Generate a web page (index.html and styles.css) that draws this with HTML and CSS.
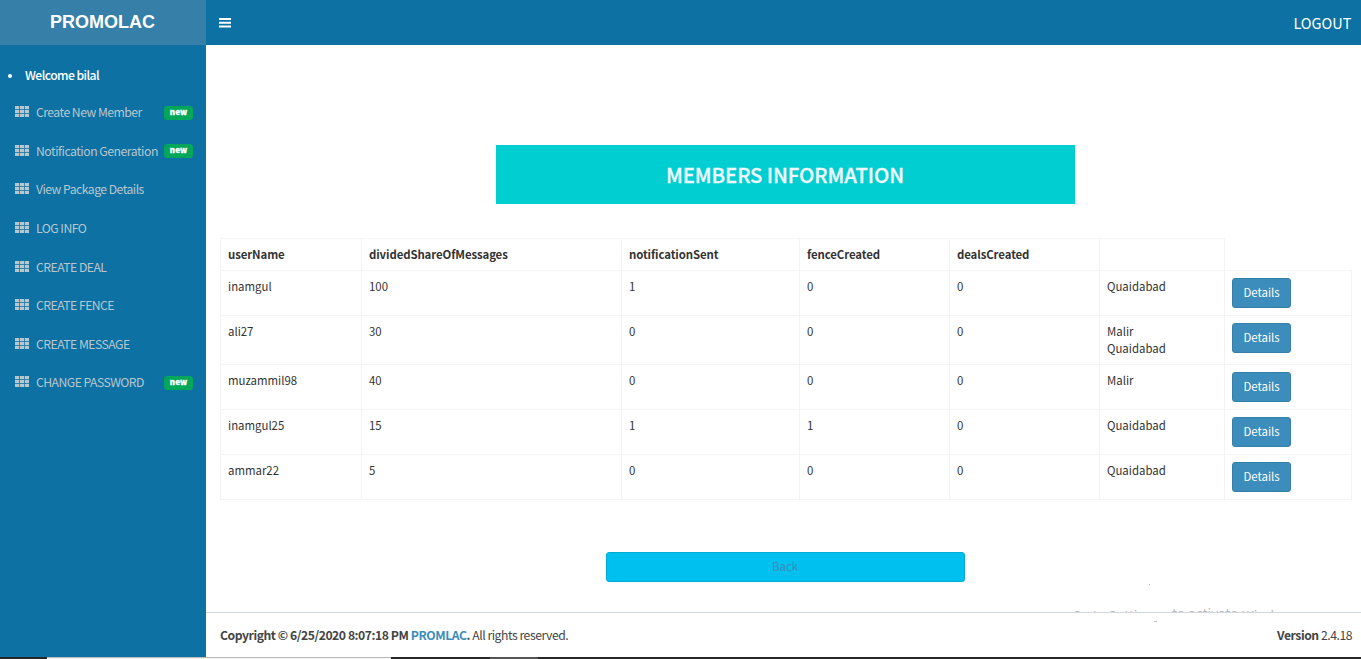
FILE: index.html
```html
<!DOCTYPE html>
<html lang="en">
<head>
<meta charset="utf-8">
<title>Promolac</title>
<link rel="stylesheet" href="styles.css">
</head>
<body>
<svg class="defs" width="0" height="0"><symbol id="grid" viewBox="0 0 14 11"><path d="M0 0h4.2v3.3H0zM4.9 0h4.2v3.3H4.9zM9.8 0H14v3.3H9.8zM0 3.9h4.2v3.2H0zM4.9 3.9h4.2v3.2H4.9zM9.8 3.9H14v3.2H9.8zM0 7.7h4.2V11H0zM4.9 7.7h4.2V11H4.9zM9.8 7.7H14V11H9.8z"/></symbol></svg>
<div class="app">
  <aside class="sidebar">
    <a class="logo">PROMOLAC</a>
    <div class="welcome"><i class="dot"></i><span>Welcome bilal</span></div>
    <nav class="menu">
      <a><svg><use href="#grid"/></svg><span>Create New Member</span><b class="tag">new</b></a>
      <a><svg><use href="#grid"/></svg><span class="notif">Notification Generation</span><b class="tag">new</b></a>
      <a><svg><use href="#grid"/></svg><span>View Package Details</span></a>
      <a><svg><use href="#grid"/></svg><span>LOG INFO</span></a>
      <a><svg><use href="#grid"/></svg><span>CREATE DEAL</span></a>
      <a><svg><use href="#grid"/></svg><span>CREATE FENCE</span></a>
      <a><svg><use href="#grid"/></svg><span>CREATE MESSAGE</span></a>
      <a><svg><use href="#grid"/></svg><span>CHANGE PASSWORD</span><b class="tag">new</b></a>
    </nav>
  </aside>
  <div class="page">
    <header class="navbar">
      <svg class="bars" width="12" height="10" viewBox="0 0 12 10"><path d="M0 0h12v2H0zM0 3.7h12v2H0zM0 7.4h12v2H0z"/></svg>
      <a class="logout">LOGOUT</a>
    </header>
    <main class="content">
      <h1 class="title">MEMBERS INFORMATION</h1>
      <table class="members">
        <colgroup><col class="c1"><col class="c2"><col class="c3"><col class="c4"><col class="c4"><col class="c5"><col class="c6"></colgroup>
        <tr><th>userName</th><th>dividedShareOfMessages</th><th>notificationSent</th><th>fenceCreated</th><th>dealsCreated</th><th></th></tr>
        <tr><td>inamgul</td><td>100</td><td>1</td><td>0</td><td>0</td><td>Quaidabad</td><td><a class="btn">Details</a></td></tr>
        <tr><td>ali27</td><td>30</td><td>0</td><td>0</td><td>0</td><td>Malir<br>Quaidabad</td><td><a class="btn">Details</a></td></tr>
        <tr><td>muzammil98</td><td>40</td><td>0</td><td>0</td><td>0</td><td>Malir</td><td><a class="btn">Details</a></td></tr>
        <tr><td>inamgul25</td><td>15</td><td>1</td><td>1</td><td>0</td><td>Quaidabad</td><td><a class="btn">Details</a></td></tr>
        <tr><td>ammar22</td><td>5</td><td>0</td><td>0</td><td>0</td><td>Quaidabad</td><td><a class="btn">Details</a></td></tr>
      </table>
      <a class="back">Back</a>
      <div class="hint"><span class="low lead">Go to Settings</span><span class="mid">to activate</span><span class="low">Windows.</span></div>
    </main>
    <footer class="footer">
      <div><b>Copyright © 6/25/2020 8:07:18 PM <a>PROMLAC</a>.</b> All rights reserved.</div>
      <div><b>Version</b> 2.4.18</div>
      <i class="speck"></i><i class="speck high"></i>
    </footer>
  </div>
</div>
<div class="taskbar"><i class="search"></i><i class="task"></i></div>
</body>
</html>
```
FILE: styles.css
```css
* { box-sizing: border-box; }
body { margin: 0; height: 659px; overflow: hidden; display: flex; flex-direction: column; background: #fff; color: #333; font: 11.4px/17px "Noto Sans CJK SC", "Noto Sans", sans-serif; }
.defs { position: absolute; }
.app { display: flex; height: 657px; }
.sidebar { width: 206px; background: #0d71a3; color: #b8c7ce; flex: none; font-size: 12.2px; letter-spacing: -0.52px; }
.logo { display: block; height: 45px; padding-right: 1px; background: #367fa9; color: #fff; text-align: center; font: bold 18px/44px "Liberation Sans", sans-serif; letter-spacing: 0; }
.welcome { display: flex; align-items: center; height: 17px; margin-top: 22px; padding-left: 8px; color: #fff; font-weight: 500; }
.welcome span { letter-spacing: -0.57px; }
.dot { width: 4px; height: 4px; border-radius: 50%; background: #fff; margin-right: 13px; }
.menu { margin-top: 9.6px; }
.menu a { display: flex; align-items: center; height: 38.55px; padding: 0 13px 0 15px; white-space: nowrap; }
.menu svg { width: 14px; height: 11px; fill: #b8c7ce; margin-right: 7px; flex: none; position: relative; top: -1px; }
.notif { letter-spacing: -0.47px; }
.tag { margin-left: auto; width: 29px; height: 14px; border-radius: 3px; background: #00a65a; color: #fff; font-size: 8px; font-weight: 900; line-height: 12px; letter-spacing: 0.1px; text-align: center; -webkit-text-stroke: 0.3px #fff; }
.page { flex: 1; display: flex; flex-direction: column; }
.navbar { height: 45px; background: #0d71a3; color: #fff; display: flex; align-items: center; justify-content: space-between; padding: 0 9.5px 0 13px; }
.bars { fill: #fff; }
.logout { font-size: 14.5px; line-height: 20px; }
.content { position: relative; height: 567px; padding: 100px 9px 0 14px; display: flex; flex-direction: column; align-items: center; }
.title { margin: 0 2px 34px 0; width: 579px; height: 59px; background: #00ced1; color: #f0f8ff; font-size: 20.3px; font-weight: 500; letter-spacing: -0.07px; line-height: 58px; text-align: center; -webkit-text-stroke: 0.3px #f0f8ff; }
.members { width: 1132px; table-layout: fixed; border-collapse: collapse; }
.members th, .members td { border: 1px solid #f4f4f4; padding: 7px; text-align: left; vertical-align: top; }
.members th { letter-spacing: -0.1px; }
.members th:last-child { height: 32px; }
.c1 { width: 141px; } .c2 { width: 260px; } .c3 { width: 178px; } .c4 { width: 150px; } .c5 { width: 125px; } .c6 { width: 127px; }
.btn { display: block; width: 59px; height: 30px; border: 1px solid #367fa9; border-radius: 3px; background: #3c8dbc; color: #fff; line-height: 27px; text-align: center; }
.back { margin: 52px 2px 0 0; width: 359px; height: 30px; border: 1px solid #00acd6; border-radius: 3px; background: #00c0ef; color: #3c8dbc; line-height: 27px; text-align: center; }
.footer { position: relative; z-index: 1; flex: 1; border-top: 1px solid #d2d6de; background: #fff; display: flex; justify-content: space-between; align-items: center; padding: 0 9px 0 14px; color: #444; font-size: 12.2px; letter-spacing: -0.46px; }
.footer a { color: #3c8dbc; }
.hint { position: absolute; left: 866px; top: 560px; display: flex; color: #bbb; font-size: 13.5px; line-height: 16px; white-space: nowrap; }
.low { position: relative; top: 2px; }
.lead { width: 100px; }
.mid { width: 70px; }
.speck { position: absolute; left: 948px; top: 8px; width: 3px; height: 1px; background: #bbb; }
.high { left: 943px; top: -29px; width: 1px; }
.taskbar { height: 2px; background: #272727; display: flex; }
.search { margin-left: 47px; width: 344px; background: #f2f2f2; border-top: 1px solid #bbb; }
.task { margin-left: 99px; width: 48px; background: #555; }
```
